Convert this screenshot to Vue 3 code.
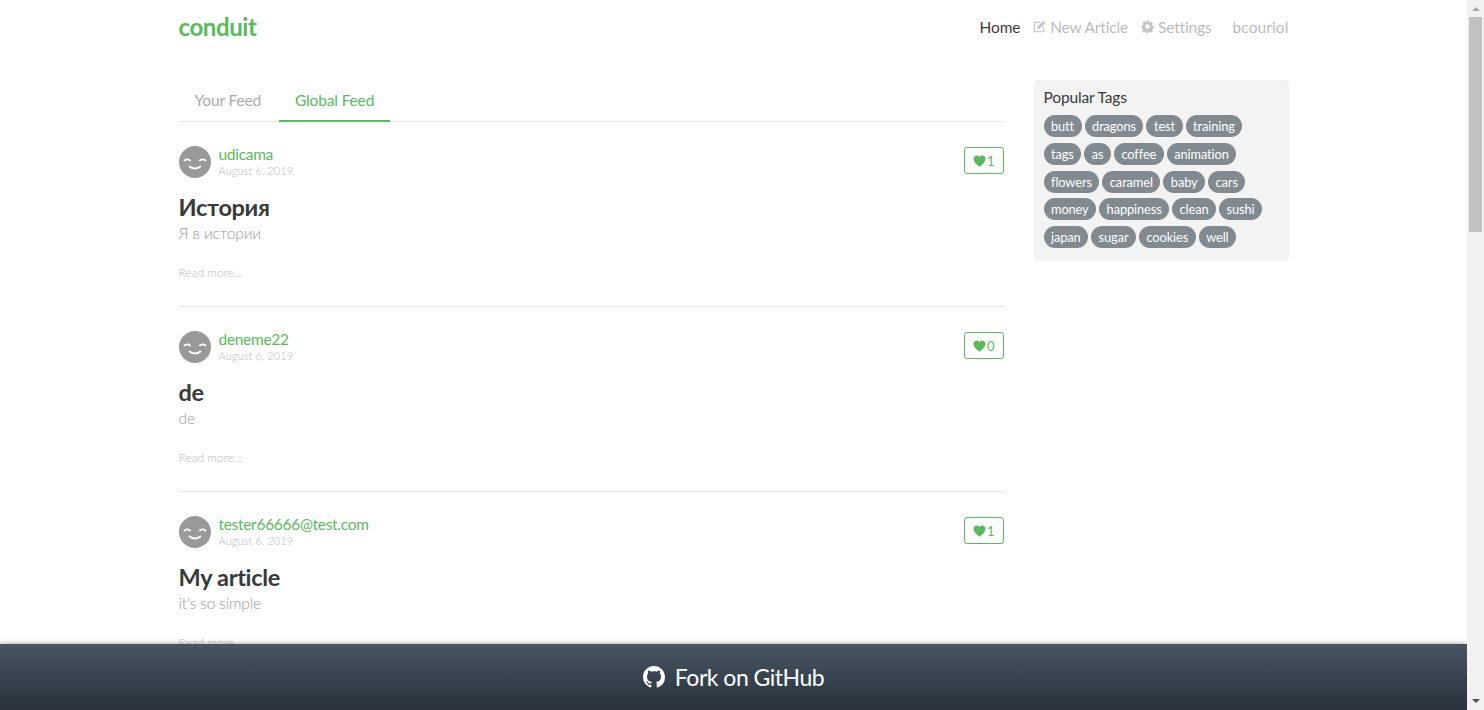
<template>
  <div class="shell">
    <div class="page">
      <nav class="navbar">
        <a class="brand">conduit</a>
        <ul class="nav-links">
          <li class="active">Home</li>
          <li>
            <svg class="nav-icon" viewBox="0 0 14 14"><path d="M.8 2h7.600L7.200 3.200H2v8.800h8.800V7.600L12 6.400V13.200H.8z" /><path d="M4.800 7.200 11 1l2.200 2.200L7 9.400l-2.600.4z" /></svg>
            New Article
          </li>
          <li>
            <svg class="nav-icon" viewBox="0 0 14 14"><path fill-rule="evenodd" d="M5.800.6h2.400l.4 1.800 1 .4 1.600-1 1.700 1.700-1 1.600.4 1 1.800.4v2.400l-1.800.4-.4 1 1 1.600-1.700 1.700-1.600-1-1 .4-.4 1.800H5.800l-.4-1.800-1-.4-1.600 1-1.700-1.700 1-1.600-.4-1L.4 8.200V5.800l1.800-.4.4-1-1-1.600 1.700-1.700 1.600 1 1-.4zM7 4.600a2.400 2.400 0 1 0 0 4.800 2.400 2.400 0 0 0 0-4.800z" /></svg>
            Settings
          </li>
          <li class="username">bcouriol</li>
        </ul>
      </nav>

      <main class="content">
        <section class="feed">
          <div class="tabs">
            <a class="tab">Your Feed</a>
            <a class="tab tab-active">Global Feed</a>
          </div>

          <article v-for="item in articles" :key="item.title" class="preview">
            <div class="meta">
              <svg class="avatar" viewBox="0 0 32 32">
                <circle cx="16" cy="16" r="16" fill="#999" />
                <path d="M5.500 14.500q2.800-2.200 5.600 0M20.900 14.500q2.800-2.200 5.600 0M10.500 20.500q5.500 4 11 0" fill="none" stroke="#fff" stroke-width="1.800" stroke-linecap="round" />
              </svg>
              <div class="info">
                <a class="author">{{ item.author }}</a>
                <span class="date">August 6, 2019</span>
              </div>
              <button class="like">
                <svg class="heart" viewBox="0 0 14 13"><path d="M7 12.600C3 9.400.5 7.200.5 4.200.5 2 2.100.6 4 .6c1.300 0 2.400.7 3 1.800C7.600 1.300 8.700.6 10 .6c1.900 0 3.500 1.400 3.500 3.600 0 3-2.500 5.200-6.500 8.400z" /></svg>
                {{ item.likes }}
              </button>
            </div>
            <h1 class="title">{{ item.title }}</h1>
            <p class="desc">{{ item.desc }}</p>
            <span class="more">Read more...</span>
          </article>
        </section>

        <aside class="sidebar">
          <p class="side-title">Popular Tags</p>
          <div class="tag-list">
            <a v-for="tag in tags" :key="tag" class="tag">{{ tag }}</a>
          </div>
        </aside>
      </main>

      <footer class="fork">
        <svg class="gh" viewBox="0 0 16 16"><path d="M8 0C3.580 0 0 3.580 0 8c0 3.540 2.290 6.530 5.470 7.590.4.070.55-.17.55-.38 0-.19-.01-.82-.01-1.490-2.010.37-2.530-.49-2.690-.94-.09-.23-.48-.94-.82-1.130-.28-.15-.68-.52-.01-.53.630-.01 1.080.58 1.230.82.720 1.210 1.870.870 2.330.660.070-.52.280-.87.510-1.070-1.780-.2-3.640-.89-3.640-3.950 0-.87.310-1.590.820-2.150-.08-.2-.36-1.020.080-2.120 0 0 .67-.21 2.200.82.640-.18 1.320-.27 2-.27s1.360.09 2 .27c1.530-1.040 2.200-.82 2.200-.82.440 1.100.160 1.920.080 2.120.510.560.820 1.270.820 2.150 0 3.070-1.870 3.750-3.650 3.950.290.250.540.730.540 1.480 0 1.070-.01 1.930-.01 2.200 0 .210.150.460.550.380A8.010 8.010 0 0 0 16 8c0-4.420-3.580-8-8-8z" /></svg>
        <span>Fork on GitHub</span>
      </footer>
    </div>

    <div class="scrollbar">
      <span class="arrow up"></span>
      <div class="thumb"></div>
      <span class="arrow down"></span>
    </div>
  </div>
</template>

<script setup>
const articles = [
  { author: "udicama", title: "История", desc: "Я в истории", likes: 1 },
  { author: "deneme22", title: "de", desc: "de", likes: 0 },
  { author: "tester66666@test.com", title: "My article", desc: "it's so simple", likes: 1 },
];

const tags = [
  "butt", "dragons", "test", "training", "tags", "as", "coffee", "animation",
  "flowers", "caramel", "baby", "cars", "money", "happiness", "clean", "sushi",
  "japan", "sugar", "cookies", "well",
];
</script>

<style>
html,
body {
  margin: 0;
  overflow: hidden;
}
</style>

<style scoped>
.shell {
  display: flex;
  height: 710px;
  overflow: hidden;
  background: #fff;
  font-family: Lato, "Noto Sans", sans-serif;
  font-size: 15.5px;
  letter-spacing: -0.15px;
  line-height: 24px;
  color: #373a3c;
}

.page {
  position: relative;
  flex: 1;
  min-width: 0;
  overflow: hidden;
}

.navbar,
.content {
  width: 1110px;
  margin: 0 auto;
}

.navbar {
  display: flex;
  justify-content: space-between;
  align-items: flex-start;
  height: 56px;
  padding-top: 8px;
  box-sizing: border-box;
}

.brand {
  font-size: 24px;
  font-weight: 700;
  letter-spacing: -0.4px;
  line-height: 38px;
  color: #5cb85c;
}

.nav-links {
  display: flex;
  margin: 0;
  padding: 0;
  list-style: none;
  color: rgba(0, 0, 0, 0.3);
}

.nav-links li {
  margin-left: 13px;
  padding-top: 7px;
}

.nav-links .active {
  color: rgba(0, 0, 0, 0.8);
}

.nav-links .username {
  margin-left: 21px;
  letter-spacing: 0.1px;
}

.nav-icon {
  width: 13px;
  height: 13px;
  fill: #c4c4c4;
}

.content {
  display: flex;
  gap: 30px;
  padding-top: 24px;
}

.feed {
  width: 825px;
}

.tabs {
  display: flex;
  height: 41px;
  border-bottom: 1px solid #e5e5e5;
}

.tab {
  height: 39px;
  padding: 8px 16px 0;
  box-sizing: border-box;
  color: #aaa;
  margin-right: 2px;
}

.tab-active {
  height: 42px;
  margin-right: 0;
  color: #5cb85c;
  border-bottom: 2px solid #5cb85c;
}

.preview {
  height: 185px;
  box-sizing: border-box;
  padding-top: 24px;
  border-top: 1px solid #e5e5e5;
}

.tabs + .preview {
  border-top: 0;
  height: 184px;
}

.meta {
  display: flex;
  align-items: flex-start;
}

.avatar {
  width: 32px;
  height: 32px;
}

.info {
  display: flex;
  flex-direction: column;
  margin-left: 8px;
  flex: 1;
}

.author {
  color: #5cb85c;
  letter-spacing: -0.3px;
  line-height: 16px;
}

.date {
  margin-top: 1px;
  font-size: 11.2px;
  font-weight: 300;
  letter-spacing: 0;
  line-height: 16px;
  color: #bbb;
}

.like {
  display: flex;
  align-items: center;
  gap: 1px;
  height: 27px;
  margin-top: 1px;
  padding: 0 8px;
  background: #fff;
  border: 1px solid #5cb85c;
  border-radius: 3px;
  color: #5cb85c;
  font: inherit;
  font-size: 13px;
}

.heart {
  width: 13px;
  height: 12px;
  fill: #5cb85c;
}

.title {
  margin: 0;
  padding-top: 15px;
  font-size: 23.5px;
  font-weight: 700;
  letter-spacing: -0.3px;
  line-height: 26px;
  color: #373a3c;
}

.desc {
  margin: 1px 0 0;
  font-weight: 300;
  line-height: 24px;
  color: #999;
}

.more {
  display: block;
  margin-top: 18px;
  font-size: 12px;
  font-weight: 300;
  letter-spacing: 0;
  line-height: 20px;
  color: #bbb;
}

.sidebar {
  width: 255px;
  height: 181px;
  padding: 5px 10px 10px;
  box-sizing: border-box;
  background: #f3f3f3;
  border-radius: 4px;
}

.side-title {
  margin: 0 0 5px;
  line-height: 25px;
}

.tag-list {
  display: flex;
  flex-wrap: wrap;
  gap: 5.75px 3px;
}

.tag {
  height: 22px;
  padding: 0 7.5px;
  box-sizing: border-box;
  border-radius: 11px;
  background: #818a91;
  color: #fff;
  font-size: 12.8px;
  letter-spacing: -0.1px;
  line-height: 22px;
}

.fork {
  position: absolute;
  left: 0;
  right: 0;
  bottom: 0;
  display: flex;
  align-items: center;
  justify-content: center;
  gap: 10px;
  height: 66px;
  background: linear-gradient(#485563, #29323c);
  box-shadow: 0 0 5px rgba(0, 0, 0, 0.4);
  color: #fff;
  font-size: 23px;
  letter-spacing: -0.5px;
}

.gh {
  width: 22px;
  height: 22px;
  fill: #fff;
}

.scrollbar {
  display: flex;
  flex-direction: column;
  align-items: center;
  width: 17px;
  background: #f1f1f1;
}

.thumb {
  width: 13px;
  height: 215px;
  margin-top: 6px;
  background: #c1c1c1;
}

.arrow {
  width: 0;
  height: 0;
  border-left: 4px solid transparent;
  border-right: 4px solid transparent;
}

.up {
  margin-top: 7px;
  border-bottom: 4px solid #a3a3a3;
}

.down {
  margin-top: auto;
  margin-bottom: 7px;
  border-top: 4px solid #505050;
}
</style>
